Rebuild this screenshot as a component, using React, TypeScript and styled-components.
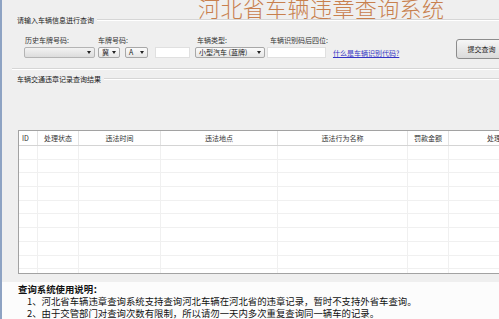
import React from 'react';
import styled, { createGlobalStyle } from 'styled-components';

const GlobalStyle = createGlobalStyle`
  html, body {
    margin: 0;
    padding: 0;
    width: 499px;
    height: 319px;
    overflow: hidden;
    background: #efefef;
  }
  body {
    font-family: "Noto Sans CJK SC", "DejaVu Sans", sans-serif;
    color: #222;
  }
  * { box-sizing: border-box; }
`;

const Window = styled.div`
  width: 499px;
  height: 319px;
  display: flex;
  flex-direction: column;
  border-left: 2px solid #8ea3c3;
  background: #efefef;
  overflow: hidden;
`;

const Title = styled.h1`
  margin: 0;
  height: 20px;
  padding-left: 196px;
  font-size: 22px;
  line-height: 15px;
  font-weight: 300;
  letter-spacing: 0.4px;
  color: #c8804e;
  white-space: nowrap;
`;

const Group = styled.section<{ $bottom?: boolean }>`
  display: flex;
  flex-direction: column;
  margin-left: 10px;
  ${p => (p.$bottom ? 'border-bottom: 1px solid #d6d6d6; box-shadow: 0 1px 0 #ffffff;' : '')}
`;

const GroupHeader = styled.div<{ $top?: number }>`
  display: flex;
  align-items: center;
  gap: 3px;
  height: 8px;
  margin-top: ${p => p.$top ?? 0}px;
  padding-left: 5px;
  font-size: 7px;
  line-height: 8px;
  white-space: nowrap;
  &::after {
    content: '';
    flex: 1;
    border-top: 1px solid #d6d6d6;
    border-bottom: 1px solid #ffffff;
  }
`;

const FieldRow = styled.div`
  display: flex;
  align-items: flex-start;
  padding: 12px 0 9px 12px;
`;

const Field = styled.div<{ $gap?: number }>`
  display: flex;
  flex-direction: column;
  gap: 3px;
  margin-left: ${p => p.$gap ?? 0}px;
`;

const FieldLabel = styled.label<{ $indent?: number }>`
  height: 8px;
  padding-left: ${p => p.$indent ?? 1}px;
  font-size: 7px;
  line-height: 8px;
  color: #333;
  white-space: nowrap;
`;

const Controls = styled.div`
  display: flex;
  gap: 5px;
`;

const Combo = styled.div<{ $w: number; $muted?: boolean }>`
  width: ${p => p.$w}px;
  height: 11px;
  display: flex;
  align-items: center;
  justify-content: space-between;
  padding: 0 3px;
  border: 1px solid ${p => (p.$muted ? '#b4b4b4' : '#a8a8a8')};
  border-radius: 2px;
  background: ${p =>
    p.$muted
      ? 'linear-gradient(#f3f3f3, #dcdcdc)'
      : 'linear-gradient(#fbfbfb, #e6e6e6)'};
  font-size: 7px;
  line-height: 9px;
  white-space: nowrap;
  color: #222;
`;

const Arrow = styled.span`
  width: 0;
  height: 0;
  flex: none;
  border-left: 2.5px solid transparent;
  border-right: 2.5px solid transparent;
  border-top: 3px solid #222;
`;

const TextBox = styled.div<{ $w: number; $gap?: number }>`
  width: ${p => p.$w}px;
  height: 11px;
  margin-left: ${p => p.$gap ?? 0}px;
  background: #ffffff;
  border: 1px solid #e0e0e0;
`;

const HelpLink = styled.a`
  align-self: flex-end;
  margin: 0 0 1px 5px;
  font-size: 7px;
  line-height: 9px;
  color: #3434c4;
  text-decoration: underline;
  white-space: nowrap;
  cursor: pointer;
`;

const SubmitButton = styled.button`
  margin: 3px -8px 0 auto;
  width: 51px;
  height: 20px;
  padding: 0;
  border: 1px solid #8c8c8c;
  border-radius: 3px;
  background: linear-gradient(#f6f6f6, #dadada);
  font-family: inherit;
  font-size: 7px;
  color: #222;
  text-align: center;
  flex: none;
`;

const TableFrame = styled.div`
  margin: 47px 0 0 6px;
  height: 144px;
  width: 560px;
  border: 1px solid #a2a2a2;
  background: #ffffff;
  overflow: hidden;
`;

const COLS = '19px 41px 82px 117px 130px 41px 110px';

const HeadRow = styled.div`
  display: grid;
  grid-template-columns: ${COLS};
  height: 15px;
  border-bottom: 1px solid #d4d4d4;
`;

const HeadCell = styled.div<{ $align?: string; $pad?: number }>`
  border-right: 1px solid #e3e3e3;
  font-size: 7px;
  line-height: 14px;
  text-align: ${p => p.$align ?? 'center'};
  padding-left: ${p => p.$pad ?? 0}px;
  white-space: nowrap;
  color: #333;
  overflow: hidden;
`;

const BodyRow = styled.div`
  display: grid;
  grid-template-columns: ${COLS};
  height: 13.7px;
  border-bottom: 1px solid #f0f0f0;
`;

const BodyCell = styled.div`
  border-right: 1px solid #f0f0f0;
`;

const Notes = styled.section`
  margin-top: 8px;
  flex: 1;
  background: #fcfcfc;
  padding: 1px 0 0 16px;
  font-size: 9.4px;
  line-height: 12px;
  color: #111;
  white-space: nowrap;
`;

const NotesTitle = styled.div`
  font-weight: 700;
`;

const NotesItem = styled.div`
  padding-left: 9px;
`;

const headers: { t: string; align?: string; pad?: number }[] = [
  { t: 'ID', align: 'left', pad: 3 },
  { t: '处理状态' },
  { t: '违法时间' },
  { t: '违法地点' },
  { t: '违法行为名称' },
  { t: '罚款金额' },
  { t: '处理机关', align: 'left', pad: 38 },
];

export default function App() {
  const rows = Array.from({ length: 10 });
  return (
    <>
      <GlobalStyle />
      <Window>
        <Title>河北省车辆违章查询系统</Title>

        <Group $bottom>
          <GroupHeader>请输入车辆信息进行查询</GroupHeader>
          <FieldRow>
            <Field>
              <FieldLabel>历史车牌号码:</FieldLabel>
              <Combo $w={71} $muted>
                <span />
                <Arrow />
              </Combo>
            </Field>
            <Field $gap={3}>
              <FieldLabel $indent={0}>车牌号码:</FieldLabel>
              <Controls>
                <Combo $w={22}>
                  <span>冀</span>
                  <Arrow />
                </Combo>
                <Combo $w={23}>
                  <span>A</span>
                  <Arrow />
                </Combo>
                <TextBox $w={35} $gap={2} />
              </Controls>
            </Field>
            <Field $gap={5}>
              <FieldLabel $indent={2}>车辆类型:</FieldLabel>
              <Combo $w={70}>
                <span>小型汽车 (蓝牌)</span>
                <Arrow />
              </Combo>
            </Field>
            <Field $gap={2}>
              <FieldLabel $indent={3}>车辆识别码后四位:</FieldLabel>
              <TextBox $w={59} />
            </Field>
            <HelpLink>什么是车辆识别代码?</HelpLink>
            <SubmitButton type="button">提交查询</SubmitButton>
          </FieldRow>
        </Group>

        <Group>
          <GroupHeader $top={6}>车辆交通违章记录查询结果</GroupHeader>
          <TableFrame>
            <HeadRow>
              {headers.map(h => (
                <HeadCell key={h.t} $align={h.align} $pad={h.pad}>
                  {h.t}
                </HeadCell>
              ))}
            </HeadRow>
            {rows.map((_, i) => (
              <BodyRow key={i}>
                {headers.map(h => (
                  <BodyCell key={h.t} />
                ))}
              </BodyRow>
            ))}
          </TableFrame>
        </Group>

        <Notes>
          <NotesTitle>查询系统使用说明：</NotesTitle>
          <NotesItem>1、河北省车辆违章查询系统支持查询河北车辆在河北省的违章记录，暂时不支持外省车查询。</NotesItem>
          <NotesItem>2、由于交管部门对查询次数有限制，所以请勿一天内多次重复查询同一辆车的记录。</NotesItem>
        </Notes>
      </Window>
    </>
  );
}
